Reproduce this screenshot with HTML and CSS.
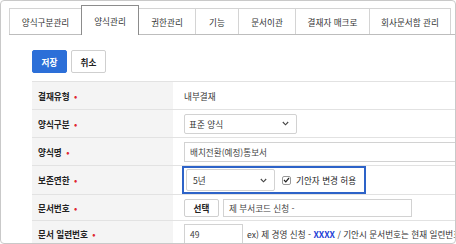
FILE: index.html
```html
<!DOCTYPE html>
<html lang="ko">
<head>
  <meta charset="UTF-8">
  <title>양식관리</title>
  <link rel="stylesheet" href="styles.css">
</head>
<body>
  <div class="frame">
    <nav class="tabs">
      <div class="tab w1">양식구분관리</div>
      <div class="tab w2 active">양식관리</div>
      <div class="tab w3">권한관리</div>
      <div class="tab w4">기능</div>
      <div class="tab w5">문서이관</div>
      <div class="tab w6">결재자 매크로</div>
      <div class="tab w7">회사문서함 관리</div>
    </nav>
    <div class="content">
      <div class="actions">
        <button class="btn btn-primary" type="button">저장</button>
        <button class="btn" type="button">취소</button>
      </div>
      <table class="form-table">
        <colgroup>
          <col class="col-label">
          <col>
        </colgroup>
        <tr class="r1">
          <th>결재유형 <span class="req">•</span></th>
          <td>내부결재</td>
        </tr>
        <tr class="r2">
          <th>양식구분 <span class="req">•</span></th>
          <td>
            <div class="select sel-type">
              <span>표준 양식</span>
              <svg class="chev" width="7" height="5" viewBox="0 0 7 5"><polyline points="0.8,1 3.5,3.8 6.2,1" fill="none" stroke="#444" stroke-width="1.1"/></svg>
            </div>
          </td>
        </tr>
        <tr class="r3">
          <th>양식명 <span class="req">•</span></th>
          <td><div class="input inp-name">배치전환(예정)통보서</div></td>
        </tr>
        <tr class="r4">
          <th>보존연한 <span class="req">•</span></th>
          <td>
            <div class="highlight">
              <div class="select sel-year">
                <span>5년</span>
                <svg class="chev" width="7" height="5" viewBox="0 0 7 5"><polyline points="0.8,1 3.5,3.8 6.2,1" fill="none" stroke="#444" stroke-width="1.1"/></svg>
              </div>
              <label class="check">
                <span class="box"><svg width="7" height="6" viewBox="0 0 7 6"><polyline points="1,3 2.8,4.8 6,1" fill="none" stroke="#222" stroke-width="1.2"/></svg></span>
                기안자 변경 허용
              </label>
            </div>
          </td>
        </tr>
        <tr class="r5">
          <th>문서번호 <span class="req">•</span></th>
          <td>
            <div class="inline">
              <button class="btn btn-small" type="button">선택</button>
              <div class="input inp-code">제 부서코드 신청 -</div>
            </div>
          </td>
        </tr>
        <tr class="r6">
          <th>문서 일련번호 <span class="req">•</span></th>
          <td>
            <div class="inline">
              <div class="input inp-seq">49</div>
              <span class="hint">ex) 제 경영 신청 - <b>XXXX</b> / 기안시 문서번호는 현재 일련번호</span>
            </div>
          </td>
        </tr>
      </table>
    </div>
  </div>
</body>
</html>
```

FILE: styles.css
```css
body {
  margin: 0;
  background: #fff;
  font-family: "Noto Sans CJK KR", "Noto Sans", sans-serif;
  color: #333;
}
.frame {
  width: 454px;
  height: 242px;
  border: 1px solid #c9c9c9;
  border-radius: 4px;
  overflow: hidden;
  background: #fff;
}
.tabs {
  display: flex;
  align-items: flex-end;
  margin: 4px 0 0 8px;
  height: 29px;
  border-bottom: 1px solid #bdbdbd;
}
.tab {
  height: 26px;
  box-sizing: border-box;
  border: 1px solid #d4d4d4;
  border-bottom: none;
  margin-left: -1px;
  display: flex;
  align-items: center;
  justify-content: center;
  font-size: 8.6px;
  color: #333;
  background: #fff;
  flex-shrink: 0;
}
.tab.active {
  height: 30px;
  margin-bottom: -1px;
  border-color: #8c8c8c;
  position: relative;
  z-index: 1;
}
.w1 { width: 73px; margin-left: 0; }
.w2 { width: 58px; }
.w3 { width: 58px; }
.w4 { width: 44px; }
.w5 { width: 58px; }
.w6 { width: 75px; }
.w7 { width: 82px; }
.content {
  padding: 15px 0 0 31px;
}
.actions {
  display: flex;
  gap: 4px;
  margin-bottom: 8px;
}
.btn {
  font-family: inherit;
  font-size: 8.6px;
  font-weight: bold;
  height: 23px;
  width: 35px;
  padding: 0;
  border: 1px solid #cfcfcf;
  border-radius: 2px;
  background: #fff;
  color: #222;
  flex-shrink: 0;
}
.btn-primary {
  background: #2c6fd8;
  border-color: #2c6fd8;
  color: #fff;
}
.form-table {
  border-collapse: collapse;
  table-layout: fixed;
  width: 430px;
  font-size: 8.6px;
}
.col-label { width: 141px; }
.form-table tr {
  border-top: 1px solid #e2e2e2;
  border-bottom: 1px solid #e2e2e2;
}
.form-table th {
  background: #f4f4f4;
  text-align: left;
  padding: 0 0 0 6px;
  font-weight: bold;
  color: #222;
  white-space: nowrap;
}
.form-table td {
  padding: 0 0 0 11px;
  color: #333;
  white-space: nowrap;
  overflow: hidden;
}
.r1 { height: 28px; }
.r2 { height: 28px; }
.r3 { height: 28px; }
.r4 { height: 29px; }
.r5 { height: 26px; }
.r6 { height: 26px; }
.req {
  color: #e0262f;
  margin-left: 2px;
}
.select {
  display: flex;
  align-items: center;
  justify-content: space-between;
  box-sizing: border-box;
  border: 1px solid #d2d2d2;
  border-radius: 2px;
  background: #fff;
  padding: 0 7px 0 4px;
  flex-shrink: 0;
}
.sel-type { width: 113px; height: 20px; }
.sel-year { width: 89px; height: 22px; padding-left: 6px; }
.input {
  box-sizing: border-box;
  border: 1px solid #d2d2d2;
  background: #fff;
  height: 20px;
  display: flex;
  align-items: center;
  padding-left: 5px;
  color: #444;
  flex-shrink: 0;
}
.inp-name { width: 290px; }
.highlight {
  display: inline-flex;
  align-items: center;
  border: 2px solid #2d63c8;
  height: 28px;
  box-sizing: border-box;
  padding: 0 8px 0 2px;
  margin-left: -2px;
  gap: 7px;
}
.check {
  display: flex;
  align-items: center;
  gap: 5px;
  color: #222;
}
.box {
  width: 7px;
  height: 7px;
  border: 1px solid #999;
  border-radius: 2px;
  display: flex;
  align-items: center;
  justify-content: center;
}
.inline {
  display: flex;
  align-items: center;
  gap: 4px;
}
.btn-small {
  height: 18px;
  width: 35px;
}
.inp-code { width: 189px; height: 18px; }
.inp-seq { width: 59px; }
.hint {
  color: #333;
}
.hint b {
  color: #1d3fd6;
}
```
